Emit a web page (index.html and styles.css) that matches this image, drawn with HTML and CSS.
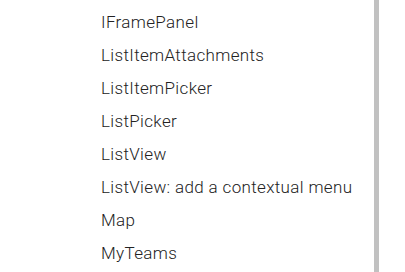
FILE: index.html
```html
<!DOCTYPE html>
<html>
<head>
<meta charset="utf-8">
<link rel="stylesheet" href="styles.css">
</head>
<body>
<div class="page">
  <nav class="nav">
    <ul class="list">
      <li>IFramePanel</li>
      <li>ListItemAttachments</li>
      <li>ListItemPicker</li>
      <li>ListPicker</li>
      <li>ListView</li>
      <li>ListView: add a contextual menu</li>
      <li>Map</li>
      <li>MyTeams</li>
    </ul>
  </nav>
  <div class="scrollbar"></div>
</div>
</body>
</html>
```
FILE: styles.css
```css
html, body {
  margin: 0;
  padding: 0;
  background: #fff;
  overflow: hidden;
}
.page {
  display: flex;
  height: 272px;
  width: 405px;
}
.nav {
  width: 374px;
  padding: 6px 0 0 101px;
  box-sizing: border-box;
}
.list {
  list-style: none;
  margin: 0;
  padding: 0;
  font-family: Roboto, "Noto Sans", sans-serif;
  font-size: 17px;
  font-weight: 300;
  line-height: 33px;
  color: #222;
  letter-spacing: 0.35px;
  white-space: nowrap;
}
.scrollbar {
  width: 5px;
  background: #c1c1c1;
}
```
